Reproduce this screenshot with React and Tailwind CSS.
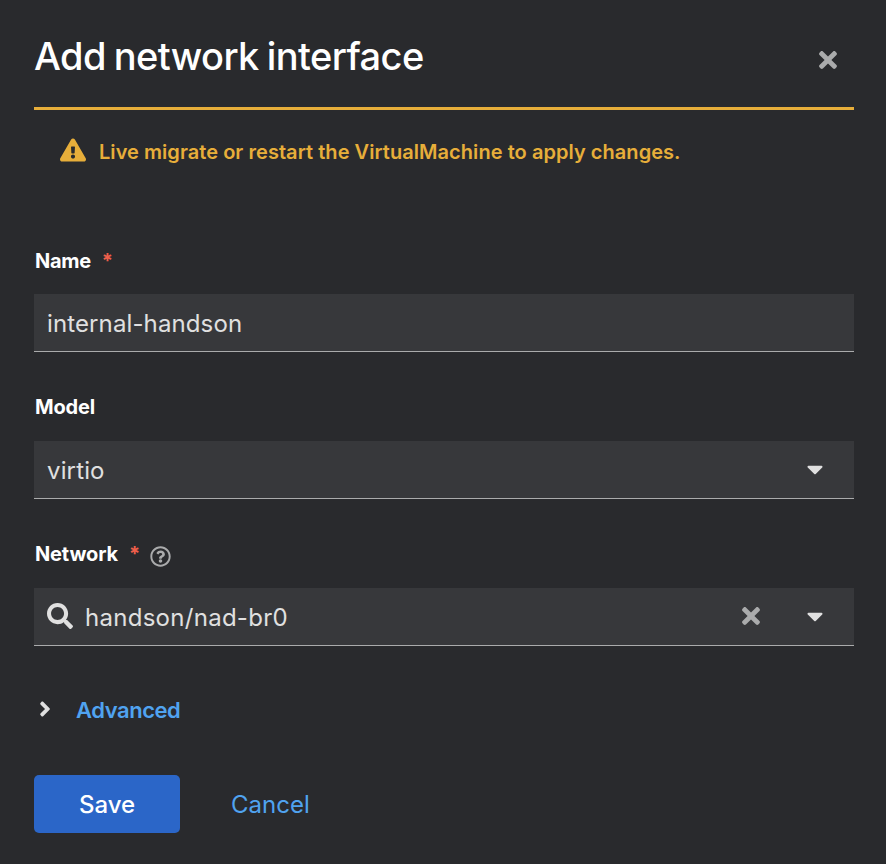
import {
  FaAngleRight,
  FaCaretDown,
  FaExclamationTriangle,
  FaRegQuestionCircle,
  FaSearch,
  FaTimes,
} from "react-icons/fa";

function FieldLabel({ children, required, tracking, help }) {
  return (
    <div className="flex h-8 items-center pl-px text-[20px] font-bold text-white">
      <span className={tracking}>{children}</span>
      {required && (
        <span className="ml-[11px] font-['Inter',sans-serif] text-[20px] font-bold text-[#ee5f4b]">*</span>
      )}
      {help && <FaRegQuestionCircle className="mt-[5px] ml-[10px] size-[21px] text-[#aaabac]" />}
    </div>
  );
}

const field =
  "flex h-[58px] w-full items-center border-b border-[#aaabac] bg-[#37383b] pl-[13px] text-[24px] text-[#e0e0e0]";

export default function App() {
  return (
    <div className="flex h-[864px] w-[886px] flex-col bg-[#292a2d] pr-8 pl-[34px] font-['Inter',sans-serif] whitespace-nowrap">
      <header className="flex h-[107px] items-start justify-between">
        <h1 className="mt-[32px] text-[38px] leading-[48px] font-medium tracking-[-0.6px] [word-spacing:-1.5px] text-white">
          Add network interface
        </h1>
        <button aria-label="Close" className="mt-[47px] mr-[13px] text-[#aaabac]">
          <FaTimes className="size-[26px]" />
        </button>
      </header>

      <div className="flex h-[90px] items-start border-t-3 border-[#e7ae3a] pl-[26px] text-[#e7ae3a]">
        <FaExclamationTriangle className="mt-[27px] size-[26px]" />
        <p className="mt-[26px] ml-[13px] text-[20px] leading-8 font-semibold tracking-[0.05px]">
          Live migrate or restart the VirtualMachine to apply changes.
        </p>
      </div>

      <div className="mt-[48px]">
        <FieldLabel required tracking="tracking-[-0.3px]">Name</FieldLabel>
        <div className={`mt-[17px] ${field}`}>
          <span className="pt-[2px] tracking-[0.12px]">internal-handson</span>
        </div>
      </div>

      <div className="mt-[39px]">
        <FieldLabel tracking="tracking-[-0.15px]">Model</FieldLabel>
        <div className={`mt-[18px] ${field}`}>
          <span className="pt-[2px] tracking-[0.15px]">virtio</span>
          <FaCaretDown className="mr-[26px] mb-[2px] ml-auto size-[26px]" />
        </div>
      </div>

      <div className="mt-[39px]">
        <FieldLabel required help tracking="tracking-[-0.15px]">Network</FieldLabel>
        <div className={`mt-[18px] ${field}`}>
          <FaSearch className="mb-[2px] size-[26px]" />
          <span className="ml-[12px] pt-[2px] tracking-[0.28px]">handson/nad-br0</span>
          <FaTimes className="mr-[38px] mb-[2px] ml-auto size-[26px] text-[#aaabac]" />
          <FaCaretDown className="mr-[26px] mb-[2px] size-[26px]" />
        </div>
      </div>

      <div className="mt-[48px] flex h-8 items-center">
        <FaAngleRight className="mb-[2px] -ml-[1px] size-[24px] text-[#e0e0e0]" />
        <span className="ml-[19px] text-[22px] font-semibold tracking-[-0.45px] text-[#50a3f0]">Advanced</span>
      </div>

      <footer className="mt-[49px] flex h-[58px] items-center text-[24px]">
        <button className="h-[58px] w-[146px] rounded-[5px] bg-[#2b66c8] pt-px font-medium text-white">Save</button>
        <button className="ml-[51px] pt-px text-[#50a3f0]">Cancel</button>
      </footer>
    </div>
  );
}
